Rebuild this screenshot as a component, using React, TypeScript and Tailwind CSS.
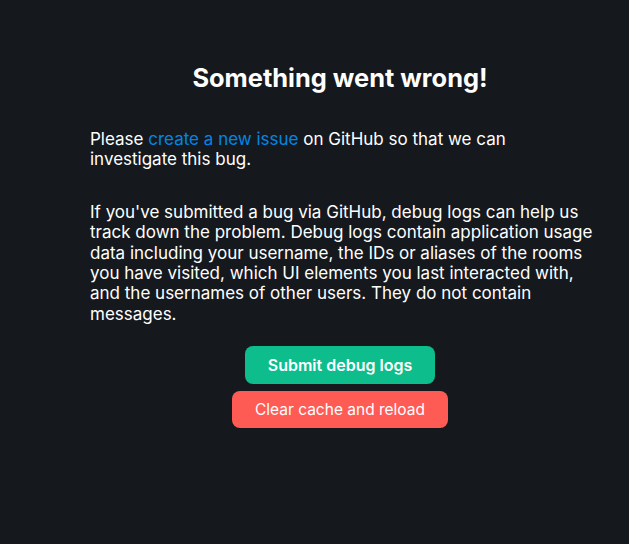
export default function App() {
  return (
    <div className="min-h-[544px] w-full bg-[#15191e] text-white" style={{ fontFamily: 'Inter, "Noto Sans", sans-serif' }}>
      <div className="ml-[90px] pt-[62px]">
        <h1 className="w-[500px] text-center text-[25.4px] font-bold leading-[32px]">Something went wrong!</h1>
        <p className="mt-[35px] w-[500px] text-[17px] leading-[20.4px]">
          Please <a className="text-[#0086e6]" href="#">create a new issue</a> on GitHub so that we can investigate this bug.
        </p>
        <p className="mt-[32px] w-[508px] text-[17px] leading-[20.4px]">
          If you've submitted a bug via GitHub, debug logs can help us track down the problem. Debug logs contain application usage data including your username, the IDs or aliases of the rooms you have visited, which UI elements you last interacted with, and the usernames of other users. They do not contain messages.
        </p>
        <div className="mt-[22px] flex w-[500px] flex-col items-center gap-[7px]">
          <button className="h-[38px] w-[190px] rounded-[8px] bg-[#0dbd8b] text-[16px] font-semibold text-white">
            Submit debug logs
          </button>
          <button className="h-[37px] w-[216px] rounded-[8px] bg-[#ff5b55] text-[15.5px] text-white">
            Clear cache and reload
          </button>
        </div>
      </div>
    </div>
  );
}
